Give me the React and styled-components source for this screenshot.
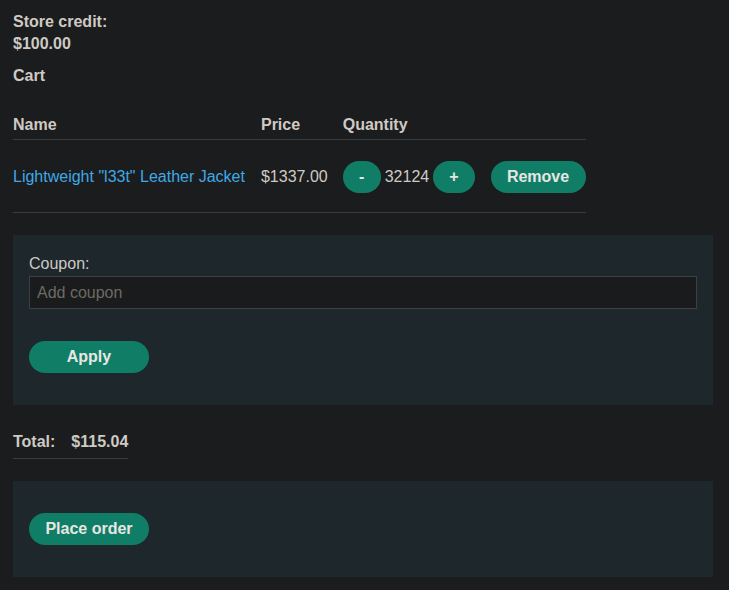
import React from "react";
import styled, { createGlobalStyle } from "styled-components";

const GlobalStyle = createGlobalStyle`
  body {
    margin: 0;
    background: #1b1c1e;
    color: #cfcac3;
    font-family: "Liberation Sans", Arial, sans-serif;
    font-size: 16px;
  }
`;

const Page = styled.div`
  width: 700px;
  padding: 11px 0 13px 13px;
`;

const Credit = styled.div`
  font-weight: bold;
  line-height: 22px;
`;

const Title = styled.h3`
  font-size: 16px;
  font-weight: bold;
  margin: 10px 0 0;
  line-height: 22px;
`;

const Table = styled.table`
  border-collapse: collapse;
  margin-top: 23px;
`;

const Th = styled.th`
  text-align: left;
  padding: 6px ${(p) => p.$pr ?? 16}px 5px 0;
  line-height: 18px;
  border-bottom: 1px solid #3a3d40;
  &:last-child {
    padding-right: 0;
  }
`;

const Td = styled.td`
  padding: 21px ${(p) => p.$pr ?? 16}px 19px 0;
  border-bottom: 1px solid #3a3d40;
  vertical-align: middle;
  &:last-child {
    padding-right: 0;
  }
`;

const ItemLink = styled.a`
  color: #3fa9e5;
  text-decoration: none;
`;

const Qty = styled.div`
  display: flex;
  align-items: center;
  gap: 4px;
`;

const Button = styled.button`
  font-family: inherit;
  font-size: 16px;
  font-weight: bold;
  color: #e8e6e3;
  background: #107e66;
  border: none;
  border-radius: 16px;
  height: 32px;
  padding: 0 16px;
  min-width: ${(p) => p.$min || 0}px;
  cursor: pointer;
`;

const Panel = styled.section`
  background: #1d272c;
  padding: ${(p) => p.$pad || "16px"};
  margin-top: 22px;
`;

const Label = styled.label`
  display: block;
  line-height: 18px;
  margin-top: 4px;
`;

const Input = styled.input`
  display: block;
  box-sizing: border-box;
  width: 100%;
  height: 33px;
  margin-top: 3px;
  background: #1a1b1d;
  border: 1px solid #3c4042;
  color: #cfcac3;
  font-family: inherit;
  font-size: 16px;
  padding: 0 7px;
  &::placeholder {
    color: #6e6a64;
  }
`;

const ApplyRow = styled.div`
  margin-top: 32px;
  display: flex;
`;

const Total = styled.div`
  display: inline-flex;
  gap: 16px;
  font-weight: bold;
  margin-top: 28px;
  padding-bottom: 7px;
  border-bottom: 1px solid #3a3d40;
  line-height: 18px;
`;

export default function App() {
  return (
    <>
      <GlobalStyle />
      <Page>
        <Credit>
          <div>Store credit:</div>
          <div>$100.00</div>
        </Credit>
        <Title>Cart</Title>
        <Table>
          <thead>
            <tr>
              <Th>Name</Th>
              <Th $pr={15}>Price</Th>
              <Th>Quantity</Th>
              <Th></Th>
            </tr>
          </thead>
          <tbody>
            <tr>
              <Td>
                <ItemLink href="#">Lightweight "l33t" Leather Jacket</ItemLink>
              </Td>
              <Td $pr={15}>$1337.00</Td>
              <Td>
                <Qty>
                  <Button $min={38}>-</Button>
                  <span>32124</span>
                  <Button $min={41}>+</Button>
                </Qty>
              </Td>
              <Td>
                <Button $min={95}>Remove</Button>
              </Td>
            </tr>
          </tbody>
        </Table>
        <Panel $pad="16px 16px 32px">
          <Label>Coupon:</Label>
          <Input placeholder="Add coupon" />
          <ApplyRow>
            <Button $min={120}>Apply</Button>
          </ApplyRow>
        </Panel>
        <Total>
          <span>Total:</span>
          <span>$115.04</span>
        </Total>
        <Panel $pad="32px 16px">
          <Button $min={120}>Place order</Button>
        </Panel>
      </Page>
    </>
  );
}
